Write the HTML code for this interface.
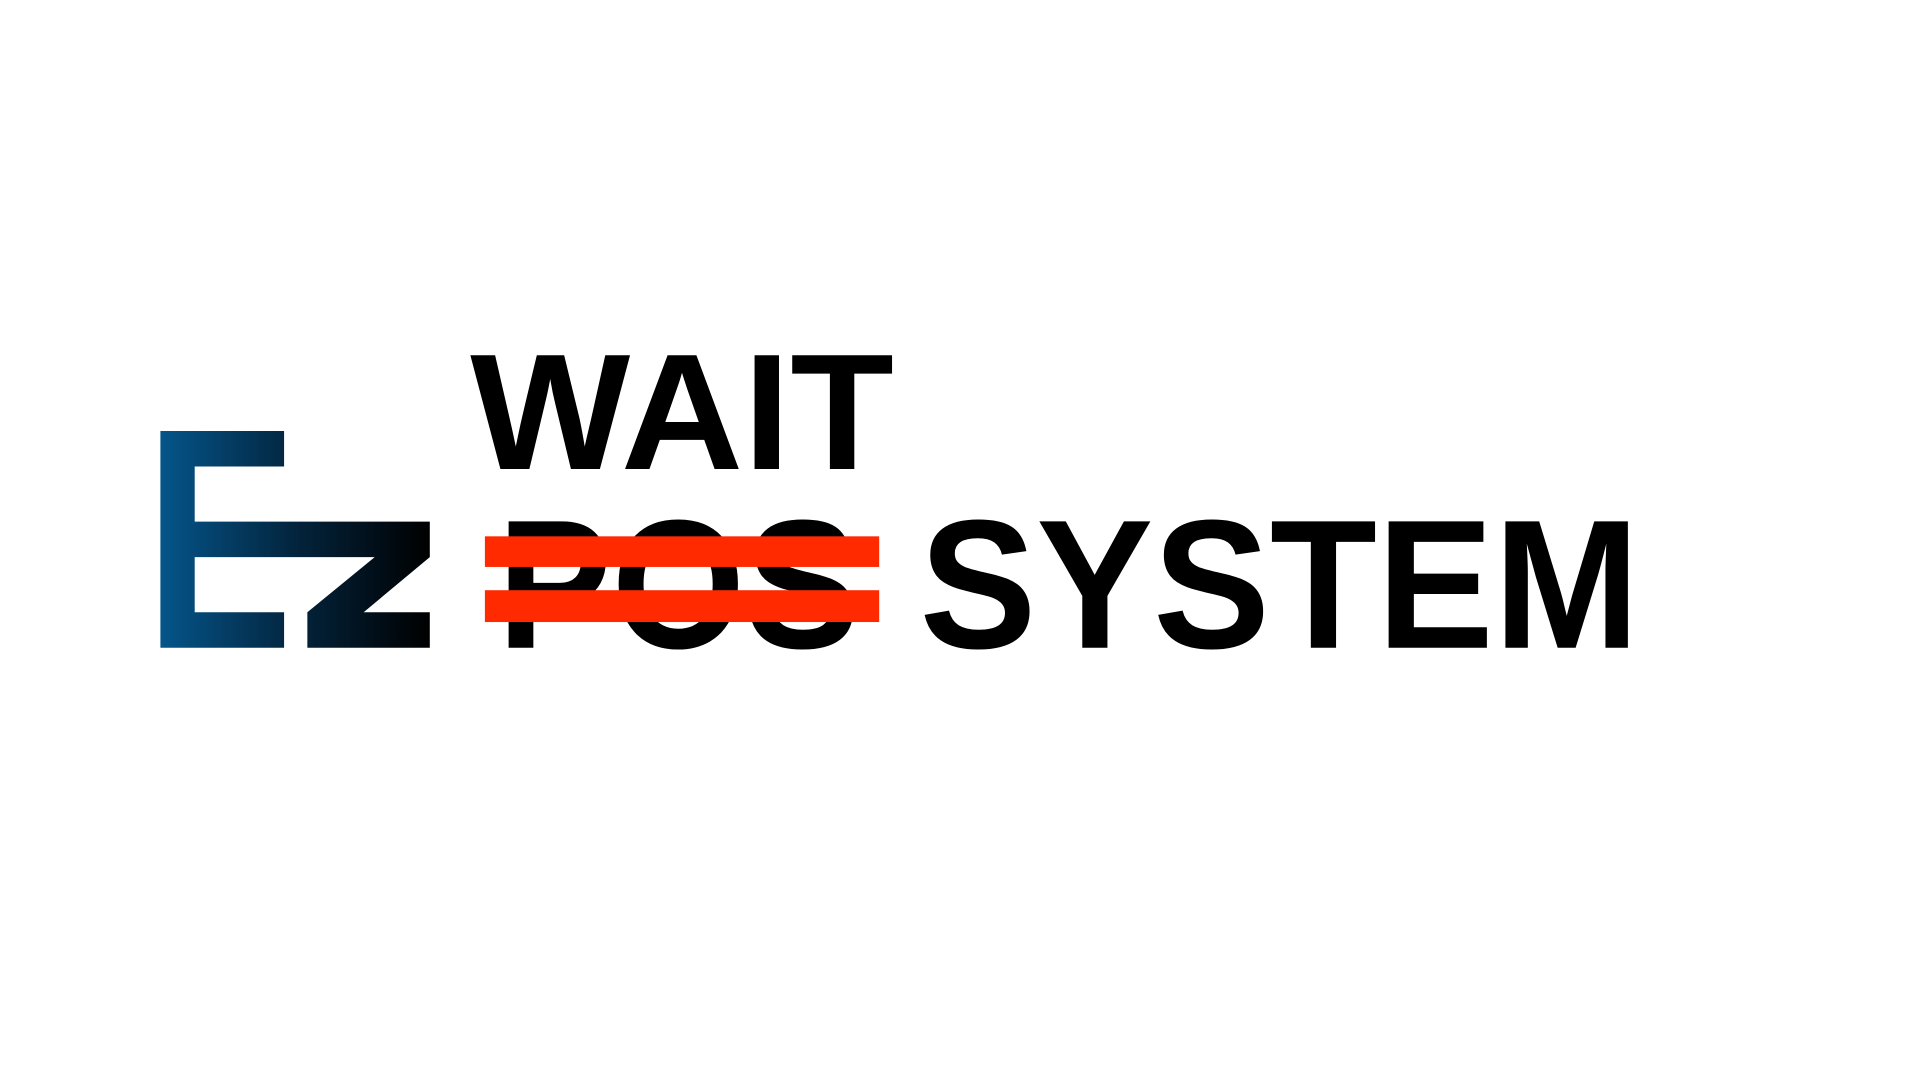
<!DOCTYPE html>
<html><head><meta charset="utf-8"><style>
html,body{margin:0;padding:0;background:#fff;width:1920px;height:1080px;overflow:hidden}
svg{display:block}
text{font-family:"Liberation Sans",sans-serif;font-weight:bold;fill:#000}
</style></head><body>
<svg width="1920" height="1080" viewBox="0 0 1568 882" preserveAspectRatio="none">
<defs>
<linearGradient id="g" x1="131" y1="0" x2="351" y2="0" gradientUnits="userSpaceOnUse">
<stop offset="0" stop-color="#04558a"/>
<stop offset="0.5" stop-color="#03243d"/>
<stop offset="1" stop-color="#000"/>
</linearGradient>
</defs>
<path fill="url(#g)" d="M131 352H232V381H159V426H351V455L297 500H351V529H251V500L306 455H159V500H232V529H131Z"/>
<text x="384" y="383" font-size="135" textLength="346" lengthAdjust="spacingAndGlyphs">WAIT</text>
<text x="406" y="529" font-size="150" textLength="296" lengthAdjust="spacingAndGlyphs">POS</text>
<text x="751" y="529" font-size="150" textLength="588" lengthAdjust="spacingAndGlyphs">SYSTEM</text>
<rect x="396" y="438" width="322" height="25" fill="#ff2a00"/>
<rect x="396" y="482" width="322" height="26" fill="#ff2a00"/>
</svg>
</body></html>
